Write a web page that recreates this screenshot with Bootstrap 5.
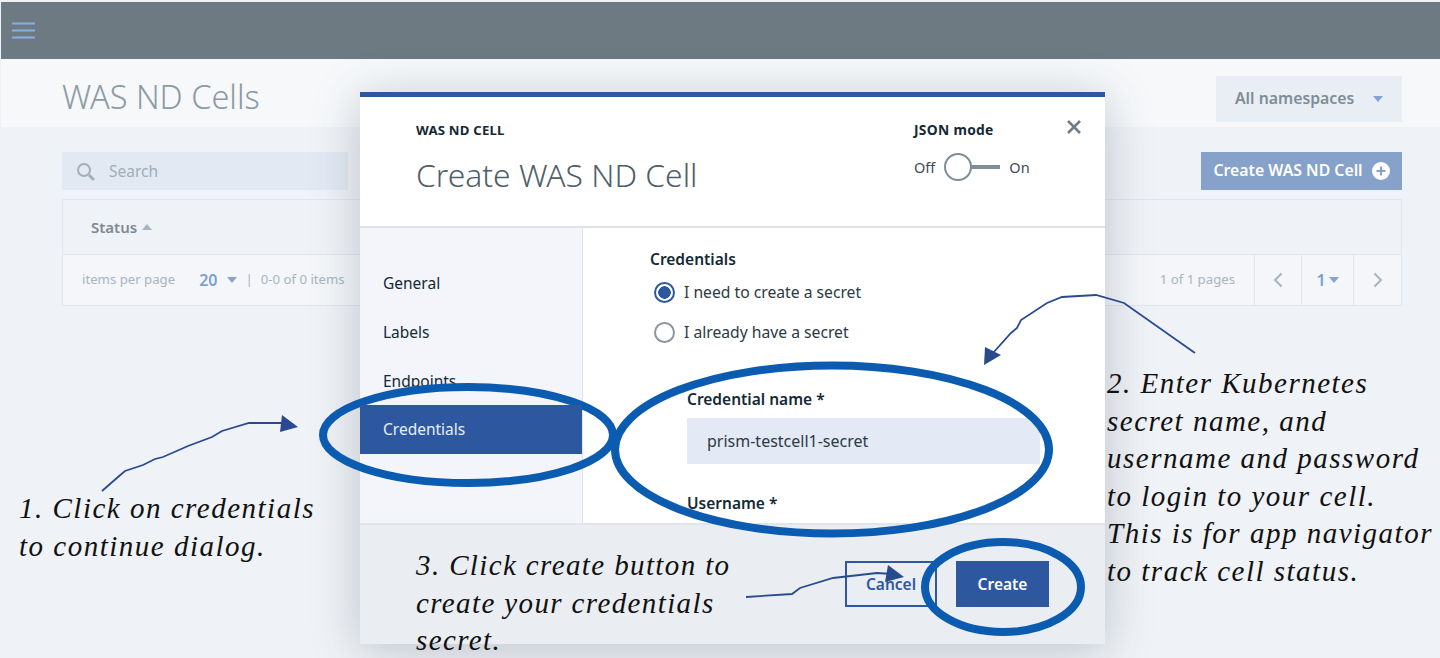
<!DOCTYPE html>
<html lang="en">
<head>
  <meta charset="UTF-8" />
  <meta name="viewport" content="width=device-width, initial-scale=1.0" />
  <title>WAS ND Cells</title>
  <link href="https://cdn.jsdelivr.net/npm/bootstrap@5.3.0/dist/css/bootstrap.min.css" rel="stylesheet" />
  <style>
    html, body { height: 658px; overflow: hidden; }
    body {
      background: #eff2f6;
      padding: 2px 0 0 1px;
      font-family: "Noto Sans", "Liberation Sans", sans-serif;
      color: #152935;
      position: relative;
    }
    .top-bar { background: #6d7a82; height: 57px; padding: 0 0 0 10px; }
    .title-band { background: #f6f8fa; height: 68px; padding: 17px 38px 0 61px; }
    .page-title { font-size: 32.5px; font-weight: 300; color: #8c9ba5; margin: 0; line-height: 42px; }
    .ns-select {
      width: 186px; height: 46px; background: #e9eef4; color: #7e8d96; border-radius: 0; border: 0;
      font-size: 15.8px; font-weight: 600; padding: 0 19px;
    }
    .caret-down { width: 0; height: 0; border-left: 5.5px solid transparent; border-right: 5.5px solid transparent; border-top: 6px solid #87a3cf; }
    .caret-up { width: 0; height: 0; border-left: 5.5px solid transparent; border-right: 5.5px solid transparent; border-bottom: 6px solid #a9b5bd; }
    .list-zone { padding: 25px 38px 0 61px; }
    .search-box { width: 286px; height: 38px; background: #e2e9f3; padding: 1px 0 0 14px; gap: 13px; color: #a0adb7; font-size: 15.5px; }
    .create-top { width: 201px; height: 38px; background: #86a1ca; color: #fff; border: 0; border-radius: 0; font-size: 15.8px; font-weight: 600; padding: 0; gap: 9px; }
    .create-top:hover { background: #86a1ca; color: #fff; }
    .data-box { margin-top: 9px; border: 1px solid #e1e6ec; height: 107px; }
    .data-head { height: 55px; padding-left: 28px; border-bottom: 1px solid #e1e6ec; gap: 5px; color: #7e8b94; font-size: 15px; font-weight: 600; }
    .data-foot { height: 50px; background: #f4f6f9; padding-left: 19px; color: #a9b5bd; font-size: 13.2px; }
    .per-count { color: #7c9fd4; font-size: 16px; font-weight: 600; margin-left: 24px; margin-right: 10px; }
    .pager-cell { height: 100%; border-left: 1px solid #e1e6ec; }
    .pager-text { color: #a9b5bd; margin-right: 19px; }
    .pager-num { color: #7c9fd4; font-size: 16px; font-weight: 600; gap: 3px; }

    .dlg {
      position: absolute; left: 360px; top: 92px; width: 745px; height: 552px;
      background: #fff;
      border: 0; border-top: 5px solid #2d58a0; border-radius: 0;
      box-shadow: 0 6px 44px rgba(60, 75, 95, .28); overflow: hidden;
    }
    .dlg-head { height: 131px; padding: 23px 24px 0 56px; border-bottom: 2px solid #dfe3e8; flex-shrink: 0; border-radius: 0; align-items: flex-start; }
    .dlg-kicker { font-size: 13.2px; font-weight: 700; line-height: 20px; letter-spacing: .2px; }
    .dlg-title { font-size: 31.8px; font-weight: 300; color: #4f5f6a; line-height: 40px; margin: 15px 0 0; }
    .json-side { width: 153px; }
    .json-label { font-size: 13.8px; font-weight: 700; line-height: 20px; letter-spacing: .3px; }
    .toggle-row { margin-top: 13px; font-size: 14.5px; color: #3d4b55; gap: 9px; line-height: 28px; }
    .toggle-track { width: 56px; height: 28px; position: relative; }
    .toggle-track::before { content: ""; position: absolute; left: 20px; right: 0; top: 12px; height: 4px; background: #7f8d96; }
    .toggle-track::after { content: ""; position: absolute; left: 0; top: 0; width: 28px; height: 28px; border-radius: 50%; background: #fff; border: 2px solid #7f8d96; }
    .x-btn { background: none; border: 0; padding: 0; line-height: 0; align-self: flex-start; }
    .dlg-mid { flex: 1; min-height: 0; }
    .dlg-side { width: 223px; background: #f3f5fa; border-right: 1px solid #dfe3e8; border-radius: 0; padding-top: 31px; flex-shrink: 0; }
    .side-link { height: 49px; background: transparent; border: 0; border-radius: 0 !important; padding: 0 0 0 23px; font-size: 15.5px; color: #152935; display: flex; align-items: center; }
    .side-link.active { background: #2d58a0; color: #e8eef8; }
    .dlg-form { flex: 1; padding: 20px 65px 0 67px; overflow: hidden; }
    .form-heading { font-size: 15.5px; font-weight: 600; line-height: 22px; margin: 0; }
    .radio-row { margin: 0; padding: 0 0 0 4px; min-height: 0; height: 40px; display: flex; align-items: center; gap: 9px; font-size: 15.7px; color: #2b3a44; }
    .radio-row .form-check-input { float: none; margin: 0; width: 21px; height: 21px; border: 2px solid #8a97a0; background-image: none; }
    .radio-row .form-check-input:checked { border-color: #2d58a0; background: radial-gradient(circle, #2d58a0 0 6px, #fff 6.5px); }
    .radio-list { margin-top: 2px; }
    .radio-row span { position: relative; top: 1px; }
    .field-wrap { padding-left: 37px; margin-top: 36px; }
    .field-label { font-size: 15.5px; font-weight: 600; margin: 0 0 8px; line-height: 22px; }
    .field-second { margin-top: 28px; }
    .field-input { height: 46px; background: #e4eaf5; border: 0; border-radius: 0; padding: 0 20px; font-size: 16px; color: #2b3a44; }
    .dlg-foot { height: 121px; flex-shrink: 0; background: #eaeef3; border-top: 2px solid #e1e5ea; padding: 36px 56px 0 0; gap: 19px; align-items: flex-start; border-radius: 0; }
    .btn-hollow { width: 92px; height: 46px; border: 2px solid #2d58a0; color: #2d58a0; background: transparent; border-radius: 0; font-size: 15.5px; font-weight: 600; margin: 0; padding: 1px 0 0; }
    .btn-solid { width: 93px; height: 46px; background: #2d58a0; color: #fff; border: 0; border-radius: 0; font-size: 15.5px; font-weight: 600; margin: 0; padding: 1px 0 0; }

    .marks { position: absolute; left: 0; top: 0; width: 1440px; height: 658px; pointer-events: none; }
    .hand-note {
      position: absolute; white-space: nowrap; color: #111;
      font-family: "Liberation Serif", serif; font-style: italic; font-size: 29px; line-height: 37.5px; letter-spacing: 1.5px;
    }
    .note-one { left: 19px; top: 490px; }
    .note-two { left: 1107px; top: 365px; }
    .note-three { left: 416px; top: 547px; letter-spacing: 1.38px; }
  </style>
</head>
<body>

  <nav class="navbar top-bar">
    <svg width="25" height="17" viewBox="0 0 25 17" aria-label="Menu"><path d="M1 1.5h23M1 8.5h23M1 15.5h23" stroke="#85ade6" stroke-width="2" fill="none"/></svg>
  </nav>

  <div class="title-band d-flex justify-content-between">
    <h1 class="page-title">WAS ND Cells</h1>
    <button class="btn ns-select d-flex align-items-center justify-content-between" type="button">
      <span>All namespaces</span><span class="caret-down"></span>
    </button>
  </div>

  <div class="list-zone">
    <div class="d-flex justify-content-between">
      <div class="search-box d-flex align-items-center">
        <svg width="20" height="20" viewBox="0 0 20 20"><circle cx="8" cy="8" r="6" fill="none" stroke="#a3afb8" stroke-width="2"/><path d="M13 13l5 5" stroke="#a3afb8" stroke-width="3"/></svg>
        <span>Search</span>
      </div>
      <button class="btn create-top d-flex align-items-center justify-content-center" type="button">
        <span>Create WAS ND Cell</span>
        <svg width="18" height="18" viewBox="0 0 18 18"><circle cx="9" cy="9" r="9" fill="#fff"/><path d="M9 4.5v9M4.5 9h9" stroke="#86a1ca" stroke-width="2"/></svg>
      </button>
    </div>
    <div class="data-box">
      <div class="data-head d-flex align-items-center"><span>Status</span><span class="caret-up"></span></div>
      <div class="data-foot d-flex align-items-center">
        <span>items per page</span>
        <span class="per-count">20</span><span class="caret-down"></span>
        <span class="ms-2 me-2">|</span>
        <span>0-0 of 0 items</span>
        <span class="pager-text ms-auto">1 of 1 pages</span>
        <div class="pager-cell d-flex align-items-center justify-content-center" style="width:47px">
          <svg width="10" height="16" viewBox="0 0 10 16"><path d="M8.5 1.5L2 8l6.5 6.5" fill="none" stroke="#a9b5bd" stroke-width="2"/></svg>
        </div>
        <div class="pager-cell pager-num d-flex align-items-center justify-content-center" style="width:52px">
          <span>1</span><span class="caret-down"></span>
        </div>
        <div class="pager-cell d-flex align-items-center justify-content-center" style="width:48px">
          <svg width="10" height="16" viewBox="0 0 10 16"><path d="M1.5 1.5L8 8l-6.500 6.500" fill="none" stroke="#a9b5bd" stroke-width="2"/></svg>
        </div>
      </div>
    </div>
  </div>

  <div class="modal-content dlg d-flex flex-column">
    <div class="modal-header dlg-head justify-content-between">
      <div>
        <div class="dlg-kicker">WAS ND CELL</div>
        <h2 class="dlg-title">Create WAS ND Cell</h2>
      </div>
      <div class="d-flex ms-auto">
        <div class="json-side">
          <div class="json-label">JSON mode</div>
          <div class="toggle-row d-flex align-items-center">
            <span>Off</span><span class="toggle-track"></span><span>On</span>
          </div>
        </div>
        <button class="x-btn" type="button" aria-label="Close">
          <svg width="14" height="14" viewBox="0 0 14 14"><path d="M1 1l12 12M13 1L1 13" stroke="#6f7e88" stroke-width="2.6"/></svg>
        </button>
      </div>
    </div>
    <div class="dlg-mid d-flex">
      <div class="list-group dlg-side">
        <a class="list-group-item side-link" href="#">General</a>
        <a class="list-group-item side-link" href="#">Labels</a>
        <a class="list-group-item side-link" href="#">Endpoints</a>
        <a class="list-group-item side-link active" href="#">Credentials</a>
      </div>
      <div class="dlg-form">
        <p class="form-heading">Credentials</p>
        <div class="radio-list">
          <label class="form-check radio-row"><input class="form-check-input" type="radio" name="secret" checked /><span>I need to create a secret</span></label>
          <label class="form-check radio-row"><input class="form-check-input" type="radio" name="secret" /><span>I already have a secret</span></label>
        </div>
        <div class="field-wrap">
          <p class="field-label">Credential name *</p>
          <input class="form-control field-input" type="text" value="prism-testcell1-secret" />
          <p class="field-label field-second">Username *</p>
        </div>
      </div>
    </div>
    <div class="modal-footer dlg-foot">
      <button class="btn btn-hollow" type="button">Cancel</button>
      <button class="btn btn-solid" type="button">Create</button>
    </div>
  </div>

  <svg class="marks" viewBox="0 0 1440 658">
    <g fill="none" stroke="#0b5cb0" stroke-width="8">
      <ellipse cx="468" cy="435" rx="145" ry="48"/>
      <ellipse cx="832" cy="449.5" rx="217" ry="84"/>
      <ellipse cx="1003" cy="587" rx="78" ry="45"/>
    </g>
    <g fill="none" stroke="#2a4a90" stroke-width="1.8">
      <path d="M102 491L118 477L125 471L143 465L155 459L163 457L188 446L212 437L222 431L249 423L284 423"/>
      <path d="M1195 353L1124 303L1096 295L1062 297L1047 303L1021 320L1017 328L1011 333L993 353"/>
      <path d="M746 597L792 594L800 588L833 578L877 573L892 574"/>
    </g>
    <g fill="#2a4a90">
      <path d="M282 415L298 427L280 432Z"/>
      <path d="M985 347L1001 355L984 365Z"/>
      <path d="M888 565L904 577L885 582Z"/>
    </g>
  </svg>

  <div class="hand-note note-one">1. Click on credentials<br>to continue dialog.</div>
  <div class="hand-note note-two">2. Enter Kubernetes<br>secret name, and<br>username and password<br>to login to your cell.<br>This is for app navigator<br>to track cell status.</div>
  <div class="hand-note note-three">3. Click create button to<br>create your credentials<br>secret.</div>

  <script src="https://cdn.jsdelivr.net/npm/bootstrap@5.3.0/dist/js/bootstrap.bundle.min.js"></script>
</body>
</html>
